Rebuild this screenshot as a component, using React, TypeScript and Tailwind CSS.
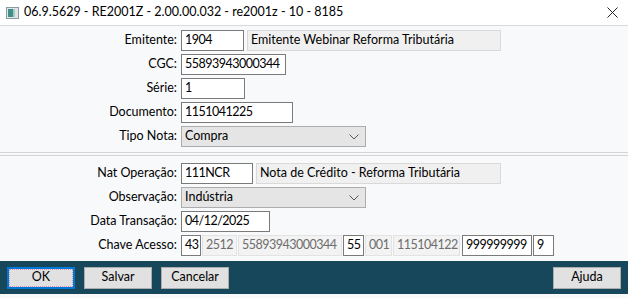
import * as React from 'react';

const font = { fontFamily: '"Segoe UI", Lato, "Noto Sans", sans-serif' };

function Label({ children }: { children: React.ReactNode }) {
  return <div className="w-[178px] shrink-0 pr-[1px] text-right text-[12.5px] text-black">{children}</div>;
}

function Input({ value, w, tone = 'edit' }: { value: string; w: string; tone?: 'edit' | 'ro' | 'dis' }) {
  const cls =
    tone === 'edit'
      ? 'border-[#7a7a7a] bg-white text-black tracking-[-0.5px]'
      : tone === 'ro'
      ? 'border-[#d9d9d9] bg-[#f0f0f0] text-black'
      : 'border-[#e3e3e3] bg-[#f3f3f3] text-[#6d6d6d] tracking-[-0.5px]';
  return (
    <div className={`flex h-[21px] items-center overflow-hidden whitespace-nowrap border px-[3px] text-[12.5px] leading-none ${cls} ${w}`}>
      {value}
    </div>
  );
}

function Select({ value }: { value: string }) {
  return (
    <div className="flex h-[21px] w-[185px] items-center justify-between border border-[#adadad] bg-[#e5e5e5] px-[3px] text-[12.5px] text-black">
      <span>{value}</span>
      <svg width="10" height="6" viewBox="0 0 10 6" className="mr-[3px]">
        <path d="M0.5 0.5 L5 5 L9.5 0.5" fill="none" stroke="#555" strokeWidth="1" />
      </svg>
    </div>
  );
}

function Row({ label, children }: { label: string; children: React.ReactNode }) {
  return (
    <div className="flex h-[21px] items-center gap-[3px]">
      <Label>{label}</Label>
      <div className="flex items-center gap-[3px]">{children}</div>
    </div>
  );
}

function Btn({ children, focus }: { children: React.ReactNode; focus?: boolean }) {
  return (
    <div
      className={`flex h-[22px] w-[68px] items-center justify-center bg-[#e1e1e1] text-[12.5px] text-black ${
        focus ? 'border-2 border-[#0078d7]' : 'border border-[#adadad]'
      }`}
    >
      {focus ? (
        <div className="flex h-full w-full items-center justify-center border border-dotted border-[#e08fb0]">
          {children}
        </div>
      ) : (
        children
      )}
    </div>
  );
}

export default function App() {
  return (
    <div className="flex h-[298px] w-[628px] flex-col bg-white" style={font}>
      <div className="flex h-[26px] shrink-0 items-center border-b border-[#d9d9d9] bg-white pl-[6px] pr-[10px]">
        <svg width="13" height="12" viewBox="0 0 13 12">
          <rect x="0.5" y="0.5" width="12" height="11" fill="#dfe5e8" stroke="#8a9aa0" />
          <rect x="2" y="2" width="5" height="8" fill="#3f8f86" />
          <rect x="7" y="2" width="2" height="8" fill="#a7c9c4" />
        </svg>
        <span className="ml-[5px] text-[12.5px] text-black">06.9.5629 - RE2001Z - 2.00.00.032 - re2001z - 10 - 8185</span>
        <svg width="11" height="11" viewBox="0 0 11 11" className="ml-auto">
          <path d="M0.5 0.5 L10.5 10.5 M10.5 0.5 L0.5 10.5" stroke="#222" strokeWidth="1" />
        </svg>
      </div>

      <div className="flex flex-1 flex-col bg-[#f8f9fa]">
        <div className="flex flex-col gap-[3px] pt-[4px]">
          <Row label="Emitente:">
            <Input value="1904" w="w-[63px]" />
            <Input value="Emitente Webinar Reforma Tributária" w="w-[254px]" tone="ro" />
          </Row>
          <Row label="CGC:">
            <Input value="55893943000344" w="w-[105px]" />
          </Row>
          <Row label="Série:">
            <Input value="1" w="w-[64px]" />
          </Row>
          <Row label="Documento:">
            <Input value="1151041225" w="w-[112px]" />
          </Row>
          <Row label="Tipo Nota:">
            <Select value="Compra" />
          </Row>
        </div>

        <div className="mt-[5px] border-t border-[#d4d4d4]" />
        <div className="mt-[2px] border-t border-[#d4d4d4]" />

        <div className="flex flex-col gap-[3px] pt-[7px]">
          <Row label="Nat Operação:">
            <Input value="111NCR" w="w-[72px]" />
            <Input value="Nota de Crédito - Reforma Tributária" w="w-[245px]" tone="ro" />
          </Row>
          <Row label="Observação:">
            <Select value="Indústria" />
          </Row>
          <Row label="Data Transação:">
            <Input value="04/12/2025" w="w-[89px]" />
          </Row>
          <div className="flex h-[21px] items-center gap-[3px]">
            <Label>Chave Acesso:</Label>
            <div className="flex items-center">
              <Input value="43" w="w-[20px]" />
              <div className="ml-[1px]"><Input value="2512" w="w-[35px]" tone="dis" /></div>
              <div className="ml-[1px]"><Input value="55893943000344" w="w-[104px]" tone="dis" /></div>
              <div className="ml-[1px]"><Input value="55" w="w-[21px]" /></div>
              <div className="ml-[1px]"><Input value="001" w="w-[27px]" tone="dis" /></div>
              <div className="ml-[1px]"><Input value="115104122" w="w-[67px]" tone="dis" /></div>
              <div className="ml-[2px]"><Input value="999999999" w="w-[70px]" /></div>
              <div className="ml-[1px]"><Input value="9" w="w-[21px]" /></div>
            </div>
          </div>
        </div>
      </div>

      <div className="flex h-[33px] shrink-0 items-center gap-[9px] bg-[#17475a] px-[7px]">
        <Btn focus>OK</Btn>
        <Btn>Salvar</Btn>
        <Btn>Cancelar</Btn>
        <div className="ml-auto">
          <Btn>Ajuda</Btn>
        </div>
      </div>
      <div className="h-[4px] shrink-0 bg-[#f8f9fa]" />
    </div>
  );
}
